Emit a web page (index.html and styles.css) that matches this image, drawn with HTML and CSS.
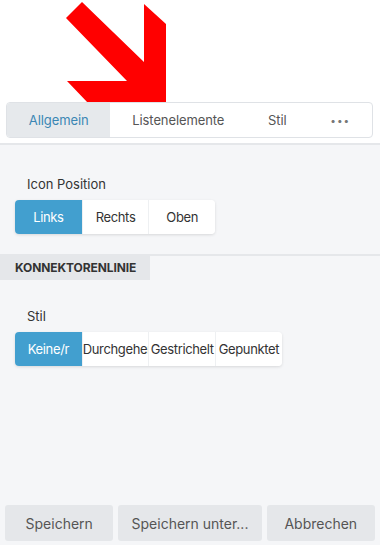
FILE: index.html
```html
<!DOCTYPE html>
<html lang="de">
<head>
  <meta charset="UTF-8">
  <meta name="viewport" content="width=device-width, initial-scale=1.0">
  <title>Einstellungen</title>
  <link rel="stylesheet" href="styles.css">
</head>
<body>
  <div class="panel">
    <div class="top">
      <svg class="arrow" width="170" height="104" viewBox="0 0 170 104">
        <polygon points="66,18 82,2 144,62 144,4 166,24 166,103 88,103 67,81 127,81" fill="#ff0000"/>
      </svg>
      <div class="tabs">
        <div class="tab active">Allgemein</div>
        <div class="tab">Listenelemente</div>
        <div class="tab">Stil</div>
        <div class="tab more">&bull;&bull;&bull;</div>
      </div>
    </div>

    <div class="content">
      <div class="group">
        <div class="label">Icon Position</div>
        <div class="segments">
          <button class="seg on">Links</button>
          <button class="seg">Rechts</button>
          <button class="seg">Oben</button>
        </div>
      </div>

      <div class="section">
        <div class="section-head">Konnektorenlinie</div>
      </div>

      <div class="group after-head">
        <div class="label">Stil</div>
        <div class="segments">
          <button class="seg on">Keine/r</button>
          <button class="seg">Durchgehend</button>
          <button class="seg">Gestrichelt</button>
          <button class="seg">Gepunktet</button>
        </div>
      </div>
    </div>

    <div class="footer">
      <button class="btn">Speichern</button>
      <button class="btn wide">Speichern unter...</button>
      <button class="btn">Abbrechen</button>
    </div>
  </div>
</body>
</html>
```

FILE: styles.css
```css
body {
  margin: 0;
  font-family: Inter, "Liberation Sans", sans-serif;
  color: #333;
  background: #f5f6f8;
}
.panel {
  height: 545px;
  display: flex;
  flex-direction: column;
}
.top {
  position: relative;
  background: #fff;
  padding: 102px 7px 5px 6px;
  border-bottom: 2px solid #e5e7ea;
}
.arrow {
  position: absolute;
  left: 0;
  top: 0;
}
.tabs {
  position: relative;
  display: flex;
  height: 34px;
  border: 1px solid #dfe2e6;
  border-radius: 4px;
  overflow: hidden;
  background: #fff;
}
.tab {
  flex: 1 1 auto;
  display: flex;
  align-items: center;
  justify-content: center;
  padding: 0 20px;
  font-size: 13px;
  letter-spacing: -0.1px;
  color: #555;
  white-space: nowrap;
}
.tab.active {
  background: #e6e9ec;
  color: #3b87b4;
}
.tab.more {
  font-size: 10px;
  letter-spacing: 1px;
  color: #777;
}
.content {
  flex: 1;
}
.group {
  padding: 31px 15px 20px;
}
.group.after-head {
  padding-top: 28px;
}
.label {
  font-size: 13px;
  padding-left: 12px;
  margin-bottom: 8px;
}
.segments {
  display: inline-flex;
  border-radius: 4px;
  box-shadow: 0 1px 3px rgba(0, 0, 0, 0.12);
  overflow: hidden;
}
.seg {
  width: 66.7px;
  height: 34px;
  padding: 0;
  border: none;
  border-left: 1px solid #eef0f2;
  background: #fff;
  font-family: inherit;
  font-size: 13px;
  letter-spacing: -0.35px;
  color: #333;
  white-space: nowrap;
  overflow: hidden;
  text-align: center;
}
.seg:first-child {
  border-left: none;
}
.seg.on {
  background: #429fcf;
  color: #fff;
}
.section {
  border-top: 2px solid #e5e7ea;
}
.section-head {
  display: inline-block;
  width: 135px;
  padding: 4px 0 5px 15px;
  background: #e5e7ea;
  font-size: 12px;
  font-weight: bold;
  text-transform: uppercase;
  letter-spacing: -0.1px;
  color: #333;
}
.footer {
  display: flex;
  gap: 5px;
  padding: 0 5px 4px 5px;
}
.btn {
  flex: 1 1 0;
  height: 36px;
  border: none;
  border-radius: 3px;
  background: #e5e7ea;
  font-family: inherit;
  font-size: 14px;
  color: #555;
}
.btn.wide {
  flex-grow: 1.36;
}
```
